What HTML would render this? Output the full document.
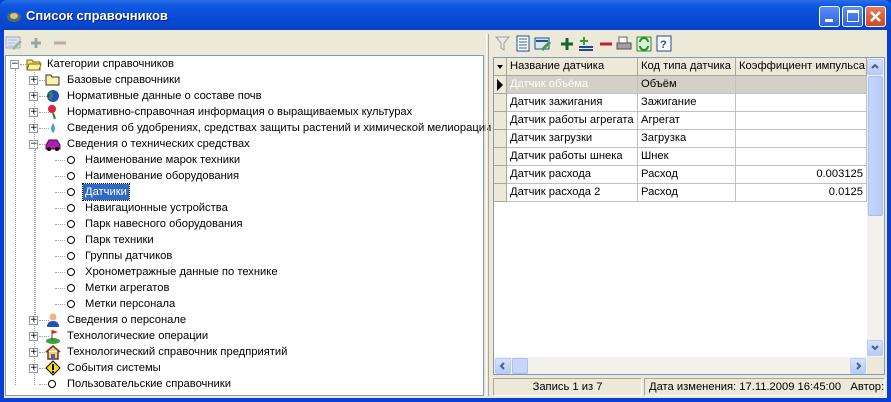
<!DOCTYPE html>
<html><head><meta charset="utf-8"><style>
*{margin:0;padding:0;box-sizing:border-box}
body{width:891px;height:402px;overflow:hidden;font-family:"Liberation Sans",sans-serif;font-size:11.2px;background:#0a3fd6;position:relative}
.a{position:absolute}
#title{left:0;top:0;width:891px;height:31px;background:linear-gradient(#2b6fe8,#0c56e0 20%,#0a4bd4 60%,#0642c8);border-radius:7px 7px 0 0}
#title span{position:absolute;left:26px;top:8px;color:#fff;font-weight:bold;font-size:13px;font-family:"Liberation Sans",sans-serif;text-shadow:1px 1px #0a1e7c}
.btn{top:6px;width:21px;height:21px;border:1px solid #fff;border-radius:3px;background:linear-gradient(#5a8df7,#2e63e0)}
#body{left:4px;top:30px;width:883px;height:368px;background:#ece9d8}
.tree{left:5px;top:55px;width:479px;height:341px;background:#fff;border:1px solid #7f9db9}
.r{position:absolute;height:16px;line-height:16px;white-space:nowrap;color:#000}
.pb{position:absolute;width:9px;height:9px;border:1px solid #919b9c;background:#fff;font-size:9px;line-height:7px;text-align:center;color:#000;font-family:"DejaVu Sans",sans-serif}
.ci{position:absolute;width:8px;height:8px;border:1px solid #000;border-radius:50%}
.dv{position:absolute;border-left:1px dotted #a0a0a0}
.dh{position:absolute;border-top:1px dotted #a0a0a0;height:0}
.grid{left:493px;top:57px;width:392px;height:318px;background:#fff;border:1px solid #7f9db9}
.hd{position:absolute;top:0;height:18px;line-height:17px;background:#ece9d8;border-right:1px solid #aca899;border-bottom:1px solid #aca899;padding-left:3px;white-space:nowrap;overflow:hidden}
.cell{position:absolute;height:18px;line-height:17px;border-right:1px solid #c0c0c0;border-bottom:1px solid #c0c0c0;padding-left:3px;white-space:nowrap;overflow:hidden}
.ind{position:absolute;left:0;width:13px;height:18px;background:#ece9d8;border-right:1px solid #aca899;border-bottom:1px solid #aca899}
.sb{position:absolute;background:#f3f1ec}
.arr{position:absolute;width:16px;height:16px;border-radius:2px;background:linear-gradient(#d6e2fd,#b5cbf7);border:1px solid #b8cbf6}
.stp{position:absolute;top:378px;height:18px;border:1px solid;border-color:#aca899 #fff #fff #aca899;line-height:16px;white-space:nowrap;overflow:hidden}
</style></head><body>
<div id="title" class="a"><svg class="a" style="left:6px;top:8px" width="16" height="16"><ellipse cx="8" cy="9" rx="7" ry="5" fill="#5a6a5a"/><ellipse cx="8" cy="8" rx="4" ry="3" fill="#c8c890"/></svg><span>Список справочников</span></div>
<div class="a btn" style="left:819px"><div class="a" style="left:5px;top:12px;width:8px;height:3px;background:#fff"></div></div>
<div class="a btn" style="left:842px"><div class="a" style="left:4px;top:3px;width:12px;height:12px;border:1px solid #fff;border-top-width:3px"></div></div>
<div class="a btn" style="left:865px;background:linear-gradient(#e87a5c,#c94a25)"><svg width="19" height="19"><path d="M5 5l9 9M14 5l-9 9" stroke="#fff" stroke-width="2.5"/></svg></div>
<div id="body" class="a"></div>

<svg class="a" style="left:5px;top:34px" width="70" height="18">
<rect x="1" y="3" width="14" height="11" fill="#dde3ec" stroke="#a0aec0"/><path d="M3 6h9M3 9h7M3 12h5" stroke="#b0b8c8"/><path d="M8 15l8-8" stroke="#9cb89c" stroke-width="3"/>
<path d="M31 4v10M26 9h10" stroke="#9aa8a0" stroke-width="3"/>
<path d="M49 9h12" stroke="#c0a8a8" stroke-width="3"/></svg>

<div class="a tree">
<div class="dv" style="left:9px;top:13px;height:316px"></div>
<div class="dv" style="left:29px;top:93px;height:172px"></div>
<div class="pb" style="left:4px;top:4px">−</div><div class="dh" style="left:14px;top:8px;width:8px"></div>
<svg class="a" style="left:20px;top:1px" width="16" height="14"><path d="M1 3h5l1 2h7v8H1z" fill="#f6e37a" stroke="#7a6a00"/><path d="M3 7h12l-2 6H1z" fill="#fff2a0" stroke="#7a6a00"/></svg>
<div class="r" style="left:41px;top:0">Категории справочников</div>
</div>
<div id="rows"></div>
<script>
var L=[[1,'+','fold','Базовые справочники'],[1,'+','globe','Нормативные данные о составе почв'],[1,'+','flower','Нормативно-справочная информация о выращиваемых культурах'],[1,'+','drop','Сведения об удобрениях, средствах защиты растений и химической мелиорации'],[1,'−','car','Сведения о технических средствах'],
[2,'','','Наименование марок техники'],[2,'','','Наименование оборудования'],[2,'','','Датчики'],[2,'','','Навигационные устройства'],[2,'','','Парк навесного оборудования'],[2,'','','Парк техники'],[2,'','','Группы датчиков'],[2,'','','Хронометражные данные по технике'],[2,'','','Метки агрегатов'],[2,'','','Метки персонала'],
[1,'+','man','Сведения о персонале'],[1,'+','flag','Технологические операции'],[1,'+','house','Технологический справочник предприятий'],[1,'+','warn','События системы'],[1,'','','Пользовательские справочники']];
var ic={fold:'<path d="M1 3h5l1 2h7v8H1z" fill="#fff2a0" stroke="#333"/>',globe:'<circle cx="8" cy="8" r="6" fill="#2050c0"/><path d="M5 4q3 3 0 7" stroke="#3a8a3a" stroke-width="3" fill="none"/>',flower:'<circle cx="7" cy="5" r="4" fill="#e02040"/><path d="M8 9l2 6" stroke="#2a8a2a" stroke-width="2"/>',drop:'<path d="M8 3q4 6 0 10q-4-4 0-10" fill="#4aa0e0"/>',car:'<path d="M1 9l3-5h8l3 5v4H1z" fill="#b020b0" stroke="#500050"/><circle cx="4" cy="13" r="2"/><circle cx="12" cy="13" r="2"/>',man:'<circle cx="8" cy="5" r="3.5" fill="#e8b880"/><path d="M2 15q0-6 6-6t6 6z" fill="#2850b0"/>',flag:'<ellipse cx="8" cy="13" rx="7" ry="3" fill="#40a040"/><path d="M7 2v10" stroke="#444"/><path d="M7 2l6 2-6 2z" fill="#e02020"/>',house:'<path d="M1 8l7-6 7 6M3 7v8h10V7" fill="#f0d070" stroke="#803020" stroke-width="1.5"/><rect x="6" y="10" width="4" height="5" fill="#4060c0"/>',warn:'<path d="M8 1l7 7-7 7-7-7z" fill="#ffe000" stroke="#000"/><path d="M8 4v6M8 11v2" stroke="#000" stroke-width="2"/>'};
var h='';
L.forEach(function(e,i){var y=56+16*(i+1);var lv=e[0];
 if(lv==1){h+='<div class="dh" style="left:39px;top:'+(y+8)+'px;width:10px"></div>';
  if(e[1])h+='<div class="pb" style="left:29px;top:'+(y+4)+'px">'+e[1]+'</div>';
  if(e[2])h+='<svg class="a" style="left:45px;top:'+y+'px" width="16" height="16">'+ic[e[2]]+'</svg><div class="r" style="left:67px;top:'+y+'px">'+e[3]+'</div>';
  else h+='<div class="ci" style="left:48px;top:'+(y+4)+'px"></div><div class="r" style="left:67px;top:'+y+'px">'+e[3]+'</div>';}
 else{h+='<div class="dh" style="left:55px;top:'+(y+8)+'px;width:10px"></div><div class="ci" style="left:67px;top:'+(y+4)+'px"></div>';
  var s=e[3]=='Датчики'?'background:#316ac5;color:#fff;padding:0 2px;left:83px;outline:1px dotted #000':'left:85px';
  h+='<div class="r" style="'+s+';top:'+y+'px">'+e[3]+'</div>';}
});
document.getElementById('rows').innerHTML=h;
</script>
<div class="dv" style="left:34px;top:72px;height:313px;position:absolute"></div>

<div class="a" style="left:486px;top:34px;width:3px;height:362px;border-left:1px solid #fff;border-right:1px solid #aca899"></div>

<svg class="a" style="left:495px;top:35px" width="195" height="18">
<path d="M1 2h13l-5 6v7l-3-2V8z" fill="#e8e8e8" stroke="#a0a0a0"/>
<rect x="22" y="1" width="12" height="15" fill="#fff" stroke="#1f4a9a"/><path d="M24 4h8M24 7h8M24 10h8M24 13h8" stroke="#3060b0"/>
<rect x="40" y="3" width="14" height="11" fill="#dce6f6" stroke="#2050a0"/><path d="M41 6h12" stroke="#2050a0" stroke-width="2"/><path d="M47 15l8-8" stroke="#3aa040" stroke-width="3"/>
<path d="M72 3v12M66 9h12" stroke="#106830" stroke-width="3"/>
<path d="M89 2v8M85 6h8" stroke="#30a040" stroke-width="2"/><path d="M84 12h14M84 15h14" stroke="#1f4a9a" stroke-width="2"/>
<path d="M105 9h12" stroke="#c02030" stroke-width="3"/>
<rect x="124" y="2" width="8" height="6" fill="#fff" stroke="#666"/><rect x="122" y="8" width="14" height="6" fill="#a0a0a0" stroke="#555"/>
<rect x="142" y="2" width="14" height="14" fill="#d8f0d8" stroke="#408040"/><path d="M145 7a4 4 0 0 1 8 0M153 11a4 4 0 0 1-8 0" stroke="#209020" stroke-width="2" fill="none"/>
<rect x="162" y="1" width="14" height="15" fill="#fff" stroke="#1f4a9a"/><text x="165" y="13" font-size="11" font-weight="bold" fill="#1f4a9a" font-family="Liberation Sans">?</text>
</svg>

<div class="a grid">
<div class="hd" style="left:0;width:13px;padding:0"><svg width="12" height="17"><path d="M3 7h6l-3 4z" fill="#000"/></svg></div>
<div class="hd" style="left:13px;width:131px">Название датчика</div>
<div class="hd" style="left:144px;width:98px">Код типа датчика</div>
<div class="hd" style="left:242px;width:131px">Коэффициент импульса</div>
<div id="grows"></div>
<div class="sb" style="left:373px;top:0;width:17px;height:299px"></div>
<div class="arr" style="left:373px;top:1px"><svg width="14" height="14"><path d="M4 8l3-3 3 3" stroke="#4d6185" stroke-width="2" fill="none"/></svg></div>
<div class="a" style="left:374px;top:18px;width:15px;height:140px;background:linear-gradient(90deg,#c6d6fb,#b6cbf7);border:1px solid #aabff0;border-radius:2px"></div>
<div class="arr" style="left:373px;top:282px"><svg width="14" height="14"><path d="M4 5l3 3 3-3" stroke="#4d6185" stroke-width="2" fill="none"/></svg></div>
<div class="sb" style="left:0;top:299px;width:373px;height:17px"></div>
<div class="arr" style="left:1px;top:300px"><svg width="14" height="14"><path d="M8 4l-3 3 3 3" stroke="#4d6185" stroke-width="2" fill="none"/></svg></div>
<div class="a" style="left:18px;top:300px;width:16px;height:16px;background:#c6d6fb;border:1px solid #aabff0;border-radius:2px"></div>
<div class="arr" style="left:356px;top:300px"><svg width="14" height="14"><path d="M6 4l3 3-3 3" stroke="#4d6185" stroke-width="2" fill="none"/></svg></div>
<div class="a" style="left:373px;top:299px;width:17px;height:17px;background:#ece9d8"></div>
</div>
<script>
var G=[['Датчик объёма','Объём',''],['Датчик зажигания','Зажигание',''],['Датчик работы агрегата','Агрегат',''],['Датчик загрузки','Загрузка',''],['Датчик работы шнека','Шнек',''],['Датчик расхода','Расход','0.003125'],['Датчик расхода 2','Расход','0.0125']];
var g='';G.forEach(function(r,i){var y=18+18*i;var bg=i==0?'background:#d4d0c8;':'';
g+='<div class="ind" style="top:'+y+'px">'+(i==0?'<svg width="12" height="17"><path d="M3 3l6 6-6 6z" fill="#000"/></svg>':'')+'</div>';
g+='<div class="cell" style="'+bg+'left:13px;top:'+y+'px;width:131px;'+(i==0?'color:#fff':'')+'">'+r[0]+'</div>';
g+='<div class="cell" style="'+bg+'left:144px;top:'+y+'px;width:98px">'+r[1]+'</div>';
g+='<div class="cell" style="'+bg+'left:242px;top:'+y+'px;width:131px;text-align:right;padding-right:3px">'+r[2]+'</div>';});
document.getElementById('grows').innerHTML=g;
</script>
<div class="stp" style="left:493px;width:149px;text-align:center">Запись 1 из 7</div>
<div class="stp" style="left:644px;width:241px;padding-left:4px">Дата изменения: 17.11.2009 16:45:00 &nbsp; Автор:</div>
</body></html>
